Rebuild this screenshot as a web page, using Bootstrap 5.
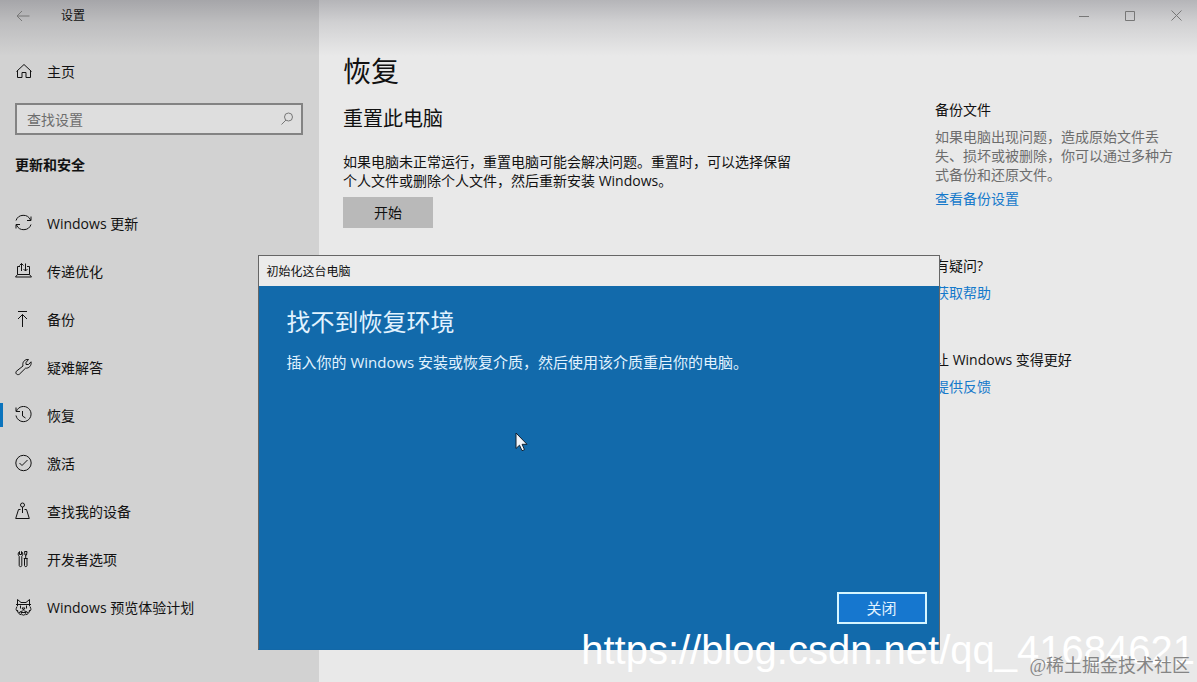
<!DOCTYPE html>
<html lang="zh-CN">
<head>
<meta charset="utf-8">
<meta name="viewport" content="width=device-width, initial-scale=1">
<title>设置</title>
<link href="https://cdn.jsdelivr.net/npm/bootstrap@5.3.0/dist/css/bootstrap.min.css" rel="stylesheet">
<style>
  body { font-family: "Open Sans", "Noto Sans CJK SC", sans-serif; font-size: 14px; line-height: 19px; color: #111; background: #e9e9e9; }
  .settings { min-height: 100vh; }
  .title-shade { height: 56px; background: linear-gradient(rgba(80, 80, 90, .34), rgba(80, 80, 90, .16) 40%, rgba(80, 80, 90, 0)); pointer-events: none; }
  .titlebar { height: 31px; }
  .titlebar button, .plain-btn { border: 0; background: none; padding: 0; color: #777; }
  .titlebar .win-btn { width: 46px; height: 31px; }
  .win-controls { right: -2px; }
  .back-btn { width: 45px; }
  .app-title { font-size: 12px; }
  svg { display: block; fill: none; stroke: currentColor; stroke-width: 1; }
  .side { width: 319px; background: #d2d2d2; }
  .side-link { height: 48px; gap: 15px; padding-left: 15px; color: #111; text-decoration: none; }
  .side-link.current { background: linear-gradient(#0b74bd, #0b74bd) left center / 3px 24px no-repeat; }
  .search { height: 32px; margin: 8px 16px 0 15px; border: 2px solid #838383; background: #dedede; }
  .search input { border: 0; background: none; outline: 0; padding: 0 0 0 10px; color: #111; min-width: 0; }
  .search input::placeholder { color: #6d6d6d; opacity: 1; }
  .section-name { font-size: 14px; line-height: 19px; font-weight: 700; margin: 20px 15px 25px; }
  .page { padding: 53px 24px 0; }
  .page h1 { font-size: 28px; line-height: 36px; font-weight: 400; margin: 0 0 16px; }
  .page h2 { font-size: 20px; line-height: 28px; font-weight: 400; margin: 0 0 19px; }
  .page p { max-width: 455px; margin: 0 0 7px; }
  .start-btn { width: 90px; height: 31px; border: 0; border-radius: 0; background: #b9b9b9; color: #111; padding: 0; font-size: 14px; line-height: 19px; }
  .help { width: 262px; padding: 100px 22px 0 0; }
  .help h3 { font-size: 14px; line-height: 19px; font-weight: 400; margin: 0 0 8px; }
  .help p { color: #6d6d6d; margin: 0 0 5px; }
  .help a { color: #1579cb; text-decoration: none; }
  .help section + section { margin-top: 48px; }
  .reset-dialog { top: 255px; left: 50%; width: 682px; max-width: 100%; height: 395px; transform: translateX(-50%); border: 1px solid #666; border-bottom-color: #1268a8; background: #126aab; color: #e2f3ff; }
  .dialog-head { height: 30px; padding-left: 8px; background: #ebebeb; color: #111; font-size: 12px; }
  .dialog-main { padding: 20px 12px 25px 28px; }
  .dialog-main h2 { font-size: 24px; line-height: 32px; font-weight: 400; margin: 0 0 14px; }
  .dialog-main p { font-size: 15px; line-height: 20px; }
  .close-btn { width: 90px; height: 32px; border: 2px solid #d5f5ff; border-radius: 0; background: #1677cf; color: #e2f3ff; padding: 0; font-size: 15px; line-height: 20px; }
  .pointer { left: 515px; top: 432px; }
  .blog-mark { right: 2px; bottom: 9px; font: 40px/46px "Liberation Sans", sans-serif; color: #fff; white-space: nowrap; }
  .site-mark { right: 7px; bottom: 4px; font: 18px/24px "Liberation Serif", "Noto Sans CJK SC", sans-serif; color: #858585; white-space: nowrap; }
</style>
</head>
<body>
<div class="settings d-flex position-relative overflow-hidden">
  <div class="title-shade position-absolute top-0 start-0 w-100"></div>

  <aside class="side flex-shrink-0">
    <div class="titlebar d-flex align-items-center position-relative">
      <button class="back-btn d-flex justify-content-center" type="button" aria-label="返回">
        <svg width="14" height="12"><path d="M13.500 6H1M6 1L1 6l5 5"/></svg>
      </button>
      <span class="app-title ms-3">设置</span>
    </div>
    <a class="side-link d-flex align-items-center mt-3" href="#">
      <svg width="17" height="18"><path d="M2.500 8.500v7H7v-5h4v5h4.500v-7M1.500 9.500L9 2.500l7.500 7"/></svg>
      <span>主页</span>
    </a>
    <div class="search d-flex align-items-center">
      <input class="flex-grow-1" type="text" placeholder="查找设置" aria-label="查找设置">
      <button class="plain-btn me-2" type="button" aria-label="搜索"><svg width="12" height="14"><circle cx="7.500" cy="5" r="4"/><path d="M5 8L.5 12.500"/></svg></button>
    </div>
    <h2 class="section-name">更新和安全</h2>
    <nav class="nav flex-column flex-nowrap">
      <a class="side-link d-flex align-items-center" href="#">
        <svg width="17" height="18"><path d="M1 6.500A7.800 7.800 0 0 1 15.500 6M16 2.500v4h-4M16 10.500A7.800 7.800 0 0 1 1.500 11M1 14.500v-4h4"/></svg>
        <span>Windows 更新</span></a>
      <a class="side-link d-flex align-items-center" href="#">
        <svg width="17" height="18"><path d="M5 4.500H2.500v8h12v-8H12M2.500 12.500l-2 2.500h16l-2-2.500M6.500 9V1.500M4.500 3.500l2-2 2 2M10.500 1.500V9M8.500 7l2 2 2-2"/></svg>
        <span>传递优化</span></a>
      <a class="side-link d-flex align-items-center" href="#">
        <svg width="17" height="18"><path d="M3 1.500h9M7.500 17V4.500M3 9l4.500-4.500L12 9"/></svg>
        <span>备份</span></a>
      <a class="side-link d-flex align-items-center" href="#">
        <svg width="17" height="18"><path d="M8 8C7 4.500 9.500 1 13.500 1.500L11 4.500v2h2.500L16 3.800c.8 4-2.200 6.700-5.500 6.400L4.300 16.300C2 17.500 0 15.300 1.300 13.300z"/></svg>
        <span>疑难解答</span></a>
      <a class="side-link current d-flex align-items-center" href="#" aria-current="page">
        <svg width="17" height="18"><path d="M1.500 5A7.600 7.600 0 1 1 1 9.500M1 1.500V5.500h4M7.500 5v5l3 2"/></svg>
        <span>恢复</span></a>
      <a class="side-link d-flex align-items-center" href="#">
        <svg width="17" height="18"><circle cx="8.500" cy="9" r="7.700"/><path d="M4.500 9l2.500 2.500 5.500-5.500"/></svg>
        <span>激活</span></a>
      <a class="side-link d-flex align-items-center" href="#">
        <svg width="17" height="18"><circle cx="7.500" cy="3" r="2"/><path d="M7.500 5v6M5.500 7.500h-2L.7 16.500h13.600L11.500 7.500h-2"/></svg>
        <span>查找我的设备</span></a>
      <a class="side-link d-flex align-items-center" href="#">
        <svg width="17" height="18"><path d="M4.500 1.500v3h2v-3C8.500 3 8 5.500 6.800 6.200v9.300c0 1.500-2.600 1.500-2.600 0V6.200C3 5.500 2.500 3 4.500 1.500zM9.500 1.500h2.500L11.500 5h-1.500zM10.700 5v3.500M8.800 8.500h3.900M9.500 8.500v7c0 1.500 2.500 1.500 2.500 0v-7"/></svg>
        <span>开发者选项</span></a>
      <a class="side-link d-flex align-items-center" href="#">
        <svg width="17" height="18"><path d="M2.500 8V1.500L6 4.500h5l3.500-3V8M1 6.500h15M2 8.500c-1.500 3-1 4 .5 5M15 8.500c1.500 3 1 4-.5 5M2.500 12c0 3 2 4.700 4 4.700M14.500 12c0 3-2 4.700-4 4.700M5.500 7.500v3M11.500 7.500v3M7 10h3l-1.500 2zM8.500 12c-1 2-4.500 1-4 3M8.500 12c1 2 4.500 1 4 3M6 14.500c1 3.500 4 3.500 5 0z"/></svg>
        <span>Windows 预览体验计划</span></a>
    </nav>
  </aside>

  <main class="page flex-grow-1">
    <h1>恢复</h1>
    <h2>重置此电脑</h2>
    <p>如果电脑未正常运行，重置电脑可能会解决问题。重置时，可以选择保留个人文件或删除个人文件，然后重新安装 Windows。</p>
    <button class="btn start-btn" type="button">开始</button>
  </main>

  <aside class="help flex-shrink-0">
    <section><h3>备份文件</h3>
      <p>如果电脑出现问题，造成原始文件丢失、损坏或被删除，你可以通过多种方式备份和还原文件。</p>
      <a href="#">查看备份设置</a></section>
    <section><h3>有疑问?</h3><a href="#">获取帮助</a></section>
    <section><h3>让 Windows 变得更好</h3><a href="#">提供反馈</a></section>
  </aside>

  <div class="titlebar win-controls d-flex position-absolute top-0">
    <button class="win-btn d-flex align-items-center justify-content-center" type="button" aria-label="最小化"><svg width="10" height="10"><path d="M0 5.500h10"/></svg></button>
    <button class="win-btn d-flex align-items-center justify-content-center" type="button" aria-label="最大化"><svg width="10" height="10"><path d="M.5.500h9v9h-9z"/></svg></button>
    <button class="win-btn d-flex align-items-center justify-content-center" type="button" aria-label="关闭窗口"><svg width="11" height="11"><path d="M.5.500l10 10M10.500.500l-10 10"/></svg></button>
  </div>

  <div class="reset-dialog position-absolute d-flex flex-column" role="dialog" aria-labelledby="dialog-name">
    <div class="dialog-head d-flex align-items-center" id="dialog-name">初始化这台电脑</div>
    <div class="dialog-main d-flex flex-column flex-grow-1">
      <h2>找不到恢复环境</h2>
      <p>插入你的 Windows 安装或恢复介质，然后使用该介质重启你的电脑。</p>
      <button class="btn close-btn mt-auto align-self-end" type="button">关闭</button>
    </div>
  </div>

  <svg class="pointer position-absolute" width="13" height="20" aria-hidden="true"><path fill="#f2f5fa" stroke="#10202e" d="M1 1v15.500l3.500-3.300 2.500 5.500 2.500-1-2.400-5.400H12z"/></svg>
  <div class="blog-mark position-absolute">https://blog.csdn.net/qq_41684621</div>
  <div class="site-mark position-absolute">@稀土掘金技术社区</div>
</div>
<script src="https://cdn.jsdelivr.net/npm/bootstrap@5.3.0/dist/js/bootstrap.bundle.min.js"></script>
</body>
</html>
